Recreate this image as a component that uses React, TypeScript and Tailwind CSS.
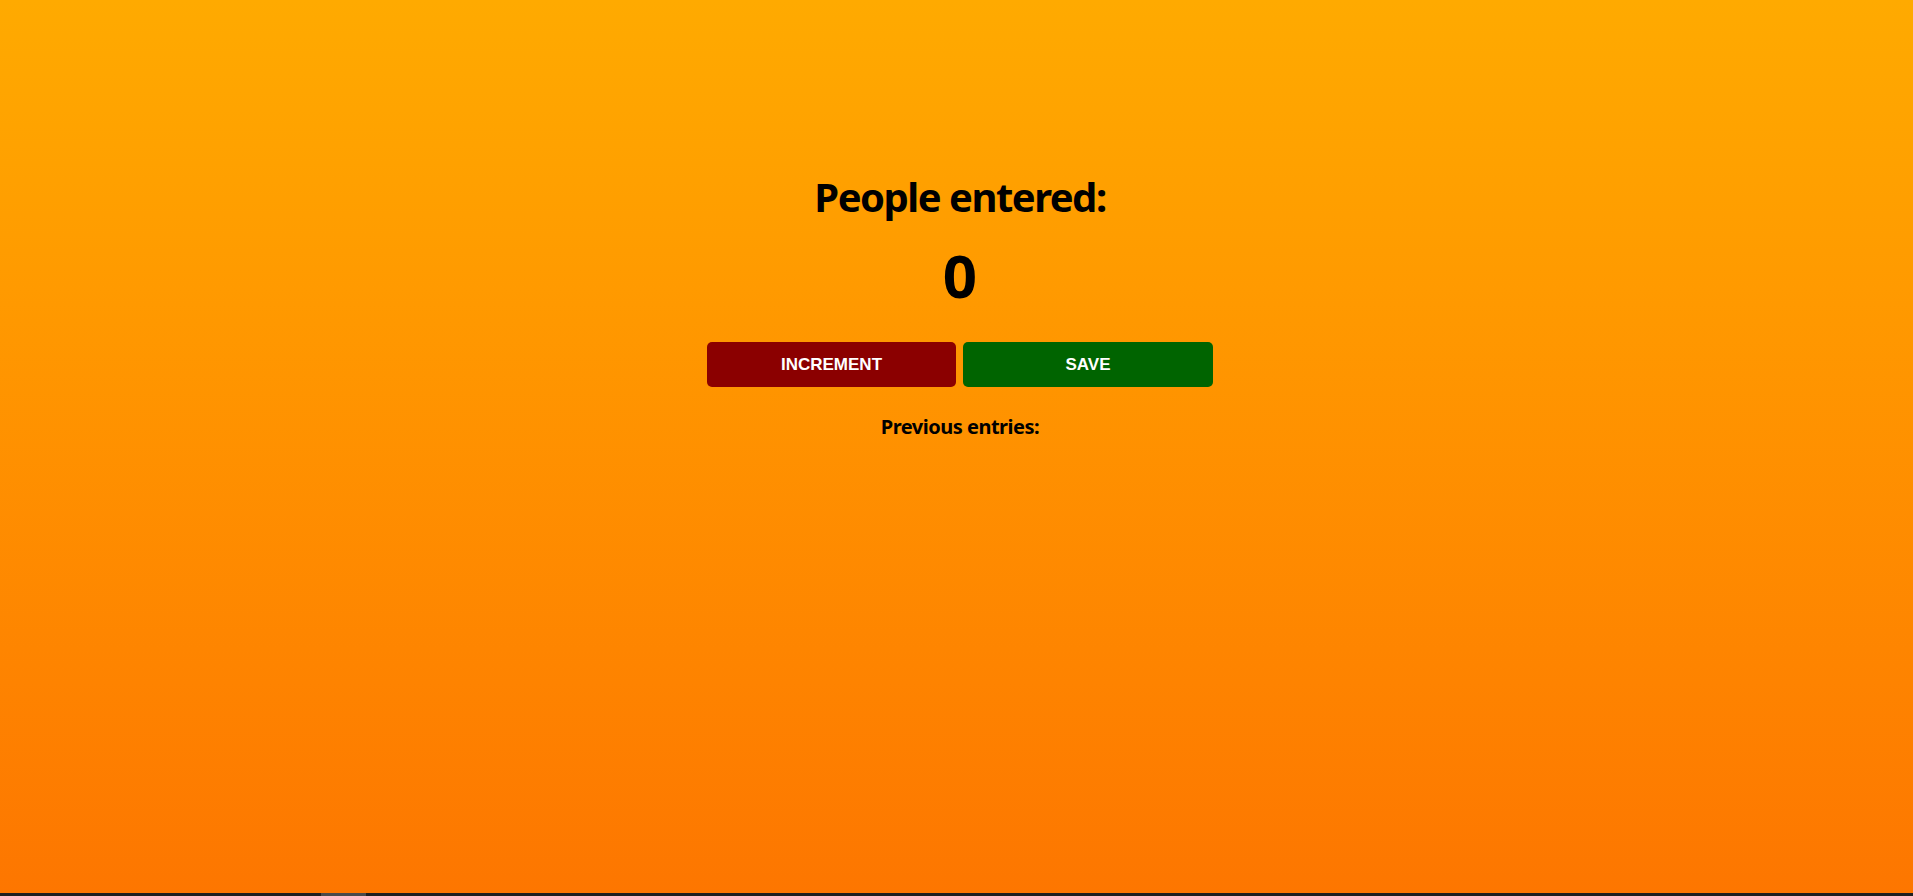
import React from "react";

export default function App() {
  return (
    <div className="flex h-screen w-full flex-col">
      <div
        className="flex flex-1 flex-col items-center bg-gradient-to-b from-[#ffaa00] to-[#fd7600] pl-[7px] text-black"
        style={{ fontFamily: '"Noto Sans", "Open Sans", sans-serif' }}
      >
        <h1 className="mt-[177px] text-[40px] font-bold leading-[40px] tracking-[-1.5px]">
          People entered:
        </h1>
        <h2 className="mt-[28px] text-[60px] font-bold leading-[60px]">0</h2>
        <div className="mt-[37px] flex gap-[7px]">
          <button
            className="h-[45px] w-[249px] rounded-[5px] bg-[#8b0000] text-[17px] font-bold uppercase text-white"
            style={{ fontFamily: '"Liberation Sans", Arial, sans-serif' }}
          >
            Increment
          </button>
          <button
            className="h-[45px] w-[250px] rounded-[5px] bg-[#006400] text-[17px] font-bold uppercase text-white"
            style={{ fontFamily: '"Liberation Sans", Arial, sans-serif' }}
          >
            Save
          </button>
        </div>
        <p className="mt-[30px] text-[20px] font-bold leading-[20px] tracking-[-0.5px]">
          Previous entries:
        </p>
      </div>
      <div className="flex h-[3px] w-full bg-[#1f1f1f]">
        <div className="w-[321px]" />
        <div className="w-[45px] bg-[#4a4a4a]" />
      </div>
    </div>
  );
}
